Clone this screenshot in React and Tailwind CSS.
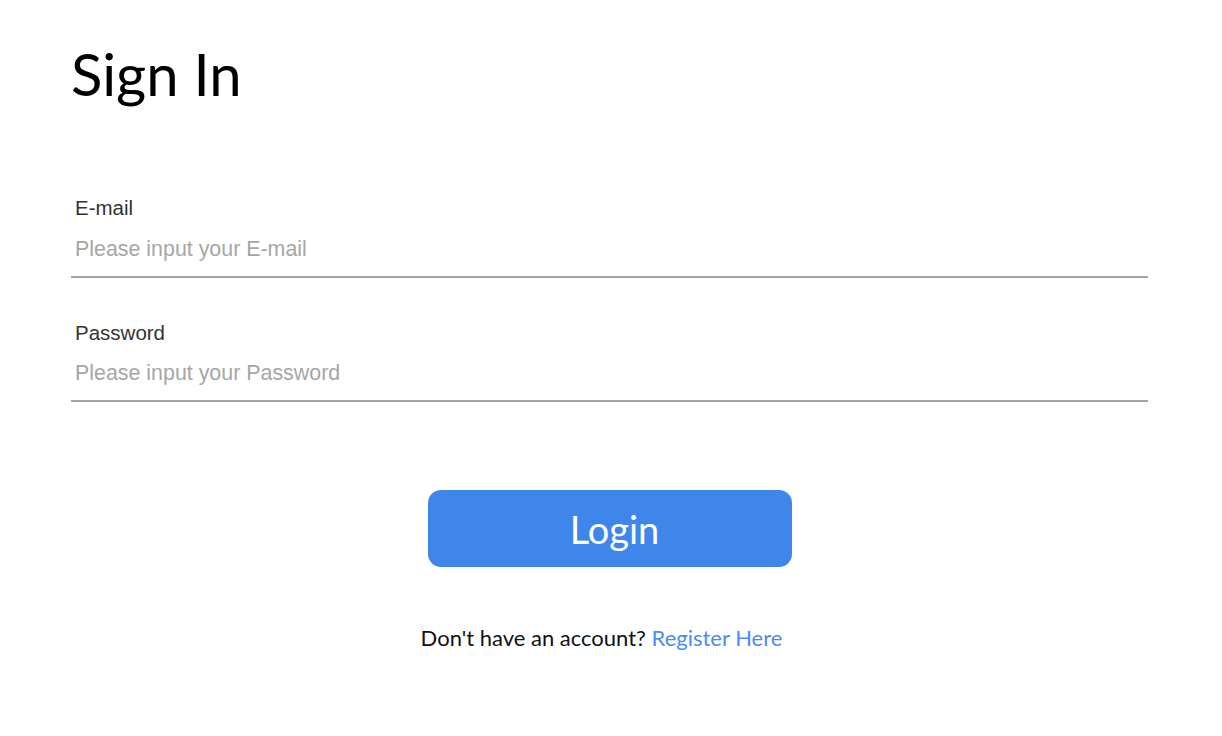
import React, { useState } from 'react';

const Field = ({ label, placeholder, type, value, onChange }) => (
  <label className="block">
    <span className="block text-[20.5px] leading-none text-[#333] pl-[4px]" style={{ fontFamily: '"Liberation Sans", Arial, sans-serif' }}>
      {label}
    </span>
    <input
      type={type}
      value={value}
      onChange={onChange}
      placeholder={placeholder}
      className="block w-full mt-[18px] pb-[14px] pl-[4px] text-[21.4px] leading-none text-[#333] placeholder:text-[#a6a6a6] border-b-2 border-[#a3a3a3] outline-none bg-transparent"
      style={{ fontFamily: '"Liberation Sans", Arial, sans-serif' }}
    />
  </label>
);

const App = () => {
  const [email, setEmail] = useState('');
  const [password, setPassword] = useState('');

  return (
    <div className="min-h-screen bg-white px-[71px] pt-[45px]" style={{ fontFamily: 'Lato, "Open Sans", sans-serif' }}>
      <h1 className="text-[58px] leading-none text-black font-normal">Sign In</h1>

      <form className="w-[1077px] mt-[95px]" onSubmit={(e) => e.preventDefault()}>
        <Field
          label="E-mail"
          type="email"
          placeholder="Please input your E-mail"
          value={email}
          onChange={(e) => setEmail(e.target.value)}
        />
        <div className="mt-[45px]">
          <Field
            label="Password"
            type="password"
            placeholder="Please input your Password"
            value={password}
            onChange={(e) => setPassword(e.target.value)}
          />
        </div>

        <div className="flex flex-col items-center mt-[88px]">
          <button
            type="submit"
            className="w-[364px] h-[77px] pl-[10px] rounded-[13px] bg-[#3f86ea] text-white text-[38px] leading-none"
          >
            Login
          </button>
          <p className="mt-[54px] pr-[16px] text-[22px] text-[#111]">
            Don't have an account?{' '}
            <a href="#" className="text-[#4a8cf0]">Register Here</a>
          </p>
        </div>
      </form>
    </div>
  );
};

export default App;
